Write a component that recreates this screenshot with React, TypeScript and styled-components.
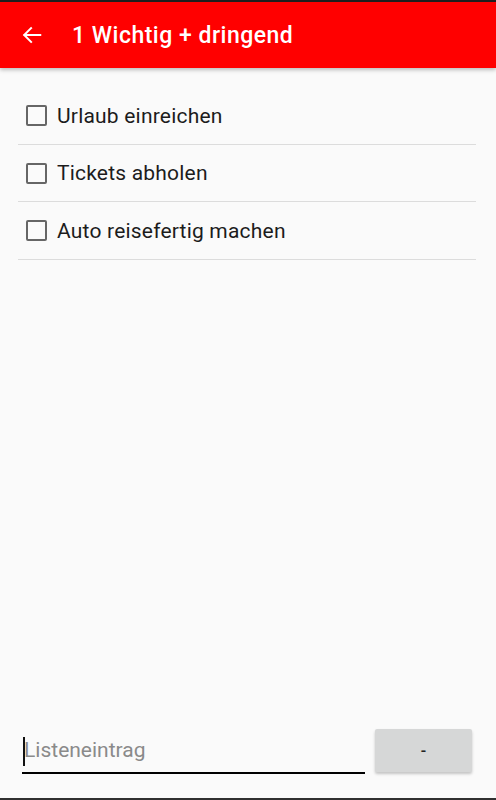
import React from "react";
import styled, { createGlobalStyle } from "styled-components";

const GlobalStyle = createGlobalStyle`
	html, body {
		margin: 0;
		padding: 0;
		background: #222;
	}
	* {
		box-sizing: border-box;
	}
`;

const Screen = styled.div`
	width: 496px;
	height: 800px;
	display: flex;
	flex-direction: column;
	background: #fafafa;
	border-top: 2px solid #1e1e1e;
	border-bottom: 2px solid #303030;
	font-family: Roboto, "Liberation Sans", sans-serif;
	overflow: hidden;
`;

const AppBar = styled.header`
	height: 66px;
	flex-shrink: 0;
	display: flex;
	align-items: center;
	background: #ff0000;
	box-shadow: 0 2px 4px rgba(0, 0, 0, 0.25);
	position: relative;
	z-index: 1;
`;

const BackButton = styled.button`
	width: 72px;
	height: 66px;
	padding: 0 0 0 21px;
	display: flex;
	align-items: center;
	background: none;
	border: none;
	color: #fff;
	cursor: pointer;
`;

const Title = styled.h1`
	margin: 0;
	color: #fff;
	font-size: 23px;
	font-weight: 500;
	letter-spacing: 0.5px;
`;

const List = styled.ul`
	list-style: none;
	margin: 0;
	padding: 19px 20px 0 18px;
	flex: 1;
`;

const Item = styled.li`
	height: 57.5px;
	display: flex;
	align-items: center;
	border-bottom: 1px solid #dcdcdc;
	gap: 10px;
	padding-left: 8px;
	padding-top: 1px;
`;

const Box = styled.span`
	width: 21px;
	height: 21px;
	border: 2px solid #666;
	border-radius: 2px;
	flex-shrink: 0;
`;

const ItemText = styled.span`
	color: #1c1c1c;
	font-size: 21px;
	letter-spacing: 0.2px;
`;

const Footer = styled.div`
	display: flex;
	align-items: flex-start;
	padding: 0 24px 24px 22px;
	gap: 10px;
`;

const Field = styled.div`
	flex: 1;
	height: 42px;
	margin-top: 3px;
	display: flex;
	align-items: center;
	border-bottom: 2px solid #000;
	position: relative;
`;

const Cursor = styled.span`
	position: absolute;
	left: 1px;
	top: 5px;
	width: 2px;
	height: 29px;
	background: #111;
`;

const Placeholder = styled.span`
	padding-left: 2px;
	padding-bottom: 4px;
	color: #8a8a8a;
	font-size: 21px;
`;

const ActionButton = styled.button`
	width: 97px;
	height: 43px;
	background: #d6d7d7;
	border: none;
	border-radius: 2px;
	box-shadow: 0 2px 3px rgba(0, 0, 0, 0.22);
	color: #222;
	font-family: Roboto, "Liberation Sans", sans-serif;
	font-size: 16px;
	font-weight: 500;
`;

const items = ["Urlaub einreichen", "Tickets abholen", "Auto reisefertig machen"];

export default function App() {
	return (
		<>
			<GlobalStyle />
			<Screen>
				<AppBar>
					<BackButton aria-label="Zurück">
						<svg width="22" height="22" viewBox="0 0 24 24" fill="none" stroke="#fff" strokeWidth="2.2" strokeLinecap="square">
							<path d="M21 12H4" />
							<path d="M11 4.5L3.5 12L11 19.5" />
						</svg>
					</BackButton>
					<Title>1 Wichtig + dringend</Title>
				</AppBar>
				<List>
					{items.map((text) => (
						<Item key={text}>
							<Box />
							<ItemText>{text}</ItemText>
						</Item>
					))}
				</List>
				<Footer>
					<Field>
						<Cursor />
						<Placeholder>Listeneintrag</Placeholder>
					</Field>
					<ActionButton>-</ActionButton>
				</Footer>
			</Screen>
		</>
	);
}
